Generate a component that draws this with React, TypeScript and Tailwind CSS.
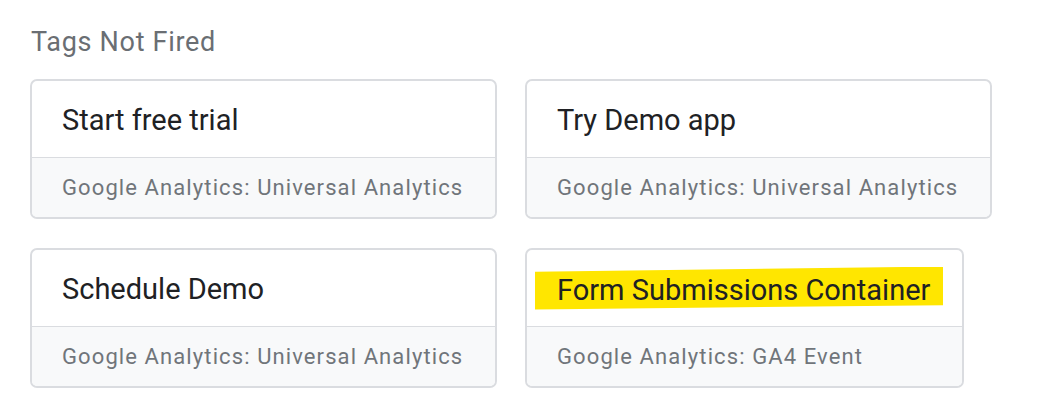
import React from "react";

function Card({ title, sub, highlight, w }: { title: string; sub: string; highlight?: boolean; w: string }) {
  return (
    <div className={`${w} h-[140px] rounded-[7px] border-2 border-[#dadce0] overflow-hidden flex flex-col bg-white`}>
      <div className="h-[77px] flex items-center pl-[30px] pt-[3px] border-b border-[#dadce0]">
        {highlight ? (
          <span className="relative inline-block text-[29px] leading-[34px]">
            <span className="absolute left-[-22px] right-[-13px] top-[-6px] bottom-[-3px] bg-[#ffe600] [clip-path:polygon(0%_12%,100%_0%,100%_90%,0%_100%)]" />
            <span className="relative text-[#202124]">{title}</span>
          </span>
        ) : (
          <span className="text-[29px] text-[#202124]">{title}</span>
        )}
      </div>
      <div className="flex-1 bg-[#f8f9fa] flex items-center pl-[30px]">
        <span className="text-[22px] tracking-[1.1px] text-[#70757a]">{sub}</span>
      </div>
    </div>
  );
}

export default function App() {
  return (
    <div className="w-[1038px] h-[417px] bg-white font-['Roboto',sans-serif] pl-[30px] pt-[24px]">
      <div className="text-[27px] tracking-[0.7px] text-[#6a6e73] leading-[36px] pl-[1px]">Tags Not Fired</div>
      <div className="grid grid-cols-[466px_466px] gap-x-[29px] gap-y-[29px] mt-[19px]">
        <Card w="w-[467px]" title="Start free trial" sub="Google Analytics: Universal Analytics" />
        <Card w="w-[467px]" title="Try Demo app" sub="Google Analytics: Universal Analytics" />
        <Card w="w-[467px]" title="Schedule Demo" sub="Google Analytics: Universal Analytics" />
        <Card w="w-[439px]" title="Form Submissions Container" sub="Google Analytics: GA4 Event" highlight />
      </div>
    </div>
  );
}
